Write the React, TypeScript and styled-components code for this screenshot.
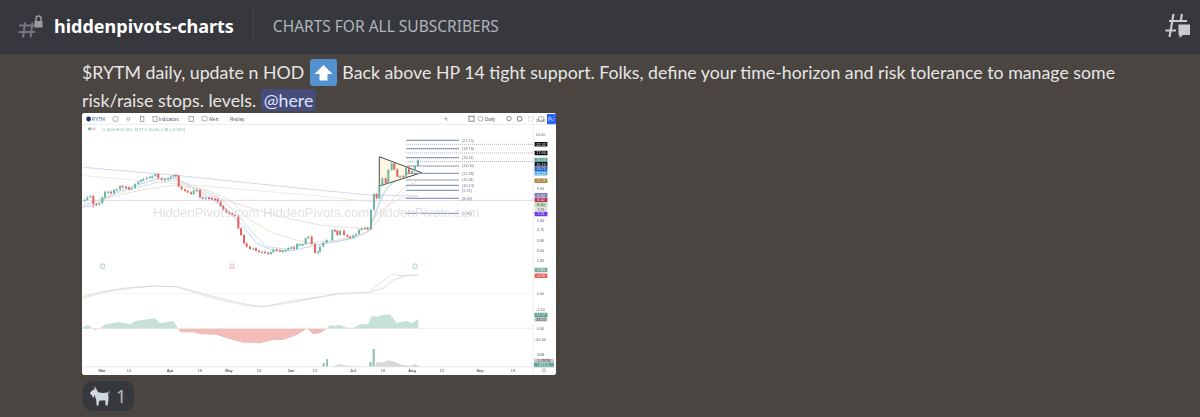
import React from 'react';
import styled, { createGlobalStyle } from 'styled-components';

const GlobalStyle = createGlobalStyle`
    html, body {
        margin: 0;
        padding: 0;
        height: 100%;
        background: #4a4540;
    }
    #root {
        height: 417px;
        overflow: hidden;
    }
`;

const Page = styled.div`
    display: flex;
    flex-direction: column;
    width: 1200px;
    height: 417px;
    background: #4a4540;
    font-family: 'Noto Sans', 'Open Sans', sans-serif;
`;

const Header = styled.header`
    display: flex;
    align-items: center;
    flex-shrink: 0;
    height: 54px;
    padding: 0 10px 2px 18px;
    box-sizing: border-box;
    background: #36383e;
`;

const ChannelName = styled.h1`
    margin: 0 0 0 11px;
    font-size: 18px;
    font-weight: 700;
    color: #ffffff;
`;

const Divider = styled.div`
    width: 1px;
    height: 32px;
    margin: 0 19px;
    background: #45474d;
`;

const Topic = styled.div`
    flex: 1;
    font-size: 15.5px;
    color: #b1b4b9;
`;

const Messages = styled.main`
    display: flex;
    flex-direction: column;
    align-items: flex-start;
    padding: 4px 0 0 82px;
`;

const MessageText = styled.p`
    width: 1050px;
    height: 56px;
    margin: 0;
    font-family: 'Lato', 'Noto Sans', sans-serif;
    font-size: 17.75px;
    line-height: 28px;
    color: #e6e6e6;
`;

const Mention = styled.span`
    padding: 0 3px;
    border-radius: 3px;
    background: #474d7a;
    color: #dfe2fd;
`;

const EmojiBox = styled.svg`
    width: 27px;
    height: 27px;
    margin: 0 1px;
    vertical-align: -7px;
`;

const ChartFrame = styled.div`
    width: 474px;
    height: 262px;
    margin-top: -1px;
    border-radius: 3px;
    overflow: hidden;
    background: #ffffff;
`;

const ChartSvg = styled.svg`
    display: block;
    width: 474px;
    height: 262px;
    filter: blur(0.35px);
    font-family: 'Liberation Sans', Arial, sans-serif;
`;

const ReactionPill = styled.div`
    display: flex;
    align-items: center;
    gap: 6px;
    width: 51px;
    height: 30px;
    margin: 6px 0 0 1px;
    padding: 0 0 0 6px;
    box-sizing: border-box;
    border-radius: 9px;
    background: #36383e;
    color: #b9bbbe;
    font-size: 18px;
`;

type Pt = [number, number];

const zoomTo = (ox: number, oy: number) => (pts: number[]): Pt[] => {
    const out: Pt[] = [];
    for (let i = 0; i < pts.length; i += 2) {
        out.push([pts[i] / 3 + ox, pts[i + 1] / 3 + oy]);
    }
    return out;
};
const upperLeft = zoomTo(-2, -3);
const upperRight = zoomTo(238, -3);
const lowerLeft = zoomTo(-2, 142);
const lowerRight = zoomTo(238, 142);

const toPath = (pts: Pt[]) =>
    pts.map((p, i) => `${i ? 'L' : 'M'}${p[0].toFixed(1)} ${p[1].toFixed(1)}`).join('');

const priceLeft = upperLeft([
    14, 270, 22, 262, 31, 258, 40, 282, 49, 283, 58, 280, 67, 262, 75, 245, 85, 245, 93, 250, 102, 240, 110, 238,
    120, 228, 128, 230, 138, 232, 147, 238, 155, 234, 165, 222, 175, 215, 183, 210, 190, 207, 200, 203, 210, 200,
    217, 199, 226, 192, 235, 205, 245, 208, 255, 207, 265, 205, 273, 200, 281, 195, 288, 197, 296, 230, 305, 238,
    315, 243, 323, 247, 333, 252, 341, 242, 350, 240, 360, 262, 368, 263, 377, 263, 387, 264, 396, 266, 405, 267,
    413, 275, 422, 288, 430, 298, 439, 307, 448, 310, 457, 314, 465, 318, 475, 355, 483, 375, 492, 400, 500, 410,
    510, 417, 520, 415, 528, 422, 537, 425, 546, 425, 555, 428, 565, 432, 573, 427, 580, 418, 590, 420, 600, 422,
    608, 422, 617, 420, 625, 414, 634, 412, 642, 417, 651, 402, 659, 402, 668, 402, 677, 385, 685, 380, 695, 402,
    705, 428, 714, 425,
]);

const priceRight = upperRight([
    0, 410, 10, 398, 20, 390, 37, 360, 45, 362, 52, 375, 60, 362, 72, 375, 82, 380, 90, 383, 100, 376, 108, 372,
    117, 360, 125, 355, 135, 353, 143, 358, 153, 300, 162, 252, 170, 265, 178, 228, 187, 205, 197, 220, 205, 180,
    215, 160, 223, 178, 232, 200, 240, 198, 250, 200, 258, 172, 267, 188, 276, 183, 285, 168, 294, 150,
]);

const candles = [...priceLeft, ...priceRight];

const MOVING_AVERAGES: { color: string; pts: Pt[] }[] = [
    { color: '#a9c9e8', pts: [...upperLeft([8, 292, 40, 287, 65, 272, 120, 242, 170, 226, 225, 208, 290, 205, 340, 235, 400, 270, 450, 310, 490, 350, 530, 400, 580, 422, 640, 422, 720, 402]), ...upperRight([50, 395, 100, 385, 145, 365, 165, 310, 190, 250, 215, 220, 240, 205, 285, 185])] },
    { color: '#c4dbe6', pts: [...upperLeft([8, 285, 70, 265, 120, 247, 170, 233, 230, 218, 295, 210, 350, 232, 420, 265, 470, 310, 510, 360, 560, 410, 620, 417, 700, 397]), ...upperRight([60, 390, 110, 380, 150, 360, 175, 290, 200, 235, 230, 210, 285, 195])] },
    { color: '#e4d8c4', pts: [...upperLeft([8, 290, 60, 270, 130, 252, 200, 237, 290, 225, 380, 240, 450, 270, 510, 330, 580, 370, 650, 390, 720, 405]), ...upperRight([60, 388, 110, 378, 150, 362, 190, 310, 215, 270, 250, 235, 290, 215])] },
    { color: '#ecd4d0', pts: [...upperLeft([295, 215, 400, 260, 500, 290, 600, 320, 720, 345]), ...upperRight([60, 350, 150, 358, 165, 320, 200, 290, 240, 265, 295, 258])] },
    { color: '#c9cfe6', pts: [...upperLeft([10, 172, 300, 197, 720, 241]), ...upperRight([150, 255, 295, 258])] },
    { color: '#ebe4dc', pts: [...upperLeft([10, 197, 300, 222, 720, 258]), ...upperRight([150, 275, 200, 278])] },
];

const FIB_LEVELS: [number, string][] = [
    [91, '(21.75)'], [116, '(18.78)'], [143, '(16.11)'], [168, '(14.00)'], [190, '(12.38)'],
    [210, '(11.04)'], [226, '(10.13)'], [241, '(9.21)'], [265, '(8.09)'], [310, '(5.93)'],
];

const PRICE_LABELS: [number, string][] = [
    [8, '25.00'], [21.5, '24.00'], [75.7, '9.00'], [107.7, '5.90'], [117, '4.75'], [128, '3.80'], [137.7, '3.00'],
    [147.7, '2.80'], [180.7, '0.00'], [197, '-1.50'], [215.3, '0.00'], [226.3, '-40.00'], [241.3, '20M'],
];

const PRICE_TAGS: [number, string, string, string][] = [
    [31.3, '#111111', '#e8e8e8', '22.32'], [40, '#111111', '#e8e8e8', '17.60'], [47, '#5d9d92', '#d8efe9', '15.03'],
    [51.3, '#0c1a22', '#e8e8e8', '15.10'], [56, '#2f5fc4', '#dfe8ff', '13.71'], [60.3, '#5aaee0', '#e8f6ff', '13.21'],
    [67.7, '#a5803f', '#f7ecd5', '11.53'], [82.3, '#8478c0', '#efeafa', '8.63'], [87, '#b13a5c', '#f7dbe3', '8.42'],
    [91.7, '#c2d9bd', '#55684f', '8.40'], [96.3, '#e3e3e3', '#666666', '7.81'], [101, '#6d3fe0', '#e9e1ff', '7.31'],
    [157, '#7fae9d', '#dff0ea', '1.60'], [162.7, '#e2635a', '#fde3e0', '-0.20'], [202, '#5d9d92', '#d8efe9', '37.37'],
    [206.3, '#b9c3c2', '#444444', '33.53'], [248, '#c9c9c9', '#444444', '5.787M'], [252, '#5da89c', '#d8efe9', '877.5'],
];

const DATE_LABELS: [number, string, boolean][] = [
    [20, 'Mar', true], [47, '14', false], [88, 'Apr', true], [118, '18', false], [147, 'May', true], [177, '16', false],
    [209, 'Jun', true], [233, '13', false], [271, 'Jul', true], [301, '18', false], [330, 'Aug', true], [360, '15', false],
    [398, 'Sep', true], [431, '19', false],
];

const GREEN = '#6fb5a5';
const RED = '#e0645f';

const Candles = () => (
    <g>
        {candles.map((p, i) => {
            const prev = candles[i - 1] || p;
            const up = p[1] <= prev[1];
            const top = Math.min(p[1], prev[1]);
            const height = Math.max(Math.abs(p[1] - prev[1]), 1.4);
            const color = up ? GREEN : RED;
            const wickBottom = i === 3 ? top + 12 : top + height + 1;
            return (
                <g key={i}>
                    <line x1={p[0]} x2={p[0]} y1={top - 1.2} y2={wickBottom} stroke={color} strokeWidth={0.6} />
                    <rect x={p[0] - 1} y={top} width={2} height={height} fill={color} />
                </g>
            );
        })}
    </g>
);

const Toolbar = () => (
    <g fontSize={4.6} fill="#555b66">
        <circle cx={6.6} cy={6} r={2.4} fill="#1d2c6b" />
        <text x={10} y={7.6} fill="#3a5a9c">RYTM</text>
        <circle cx={33.5} cy={6} r={2.7} fill="none" stroke="#777" strokeWidth={0.6} />
        <circle cx={46.3} cy={6} r={1.4} fill="none" stroke="#777" strokeWidth={0.6} />
        <rect x={58.5} y={3.6} width={3.4} height={4.8} fill="none" stroke="#777" strokeWidth={0.6} />
        <rect x={71} y={3.6} width={4} height={4.8} fill="none" stroke="#777" strokeWidth={0.6} />
        <text x={77} y={7.6}>Indicators</text>
        <rect x={107} y={3.6} width={4.6} height={4.8} fill="none" stroke="#777" strokeWidth={0.6} />
        <rect x={120} y={3.4} width={5} height={4.4} rx={1} fill="none" stroke="#777" strokeWidth={0.6} />
        <text x={127} y={7.6}>Alert</text>
        <text x={148} y={7.6}>Replay</text>
        <text x={362} y={7.6} fontSize={5}>↰</text>
        <rect x={387} y={3.2} width={5} height={5} fill="none" stroke="#555" strokeWidth={0.7} />
        <circle cx={398.5} cy={5.8} r={2.4} fill="none" stroke="#888" strokeWidth={0.6} />
        <text x={403} y={7.6}>Daily</text>
        <circle cx={427} cy={5.6} r={2.2} fill="none" stroke="#666" strokeWidth={0.7} />
        <circle cx={437.6} cy={5.8} r={2.4} fill="none" stroke="#666" strokeWidth={0.9} />
        <rect x={446.6} y={3.4} width={4.6} height={4.6} fill="none" stroke="#777" strokeWidth={0.5} strokeDasharray="1.4 1.8" />
        <rect x={456.4} y={3.8} width={5.4} height={4.2} rx={0.8} fill="none" stroke="#777" strokeWidth={0.6} />
        <rect x={465} y={1} width={9} height={10.4} fill="#2962ff" />
        <text x={466.2} y={7.6} fill="#dfe7ff">Pu</text>
        <line x1={0} x2={474} y1={11.4} y2={11.4} stroke="#dfe1e6" strokeWidth={0.6} />
        <rect x={6.2} y={14.6} width={3} height={2.6} fill={GREEN} />
        <rect x={10} y={14.6} width={3.6} height={2.6} fill="#f3c9d3" />
        <text x={20} y={18} fontSize={3.8} fill={GREEN}>O 14.00 H 15.33 L 13.77 C 15.03 +1.38 (+9.74%)</text>
    </g>
);

const Fibs = () => (
    <g fontSize={3.8} fill="#6f7785">
        {FIB_LEVELS.map(([y, label]) => (
            <g key={label}>
                <line x1={324} x2={377} y1={y / 3 - 3} y2={y / 3 - 3} stroke="#8f9db5" strokeWidth={1.2} />
                <text x={380} y={y / 3 - 1.6}>{label}</text>
            </g>
        ))}
        {[103, 129, 155].map(y => (
            <line key={y} x1={324} x2={451} y1={y / 3 - 3} y2={y / 3 - 3} stroke="#5c6068" strokeWidth={0.5} strokeDasharray="1 1" />
        ))}
    </g>
);

const PriceAxis = () => (
    <g fontSize={3.9} textAnchor="middle">
        <line x1={451.4} x2={451.4} y1={11.4} y2={262} stroke="#e2e4e8" strokeWidth={0.6} />
        {PRICE_LABELS.map(([y, label]) => (
            <text key={y} x={458.5} y={y + 1.3} fill="#6a6f78">{label}</text>
        ))}
        {PRICE_TAGS.map(([y, bg, fg, label]) => (
            <g key={y}>
                <rect x={y > 240 ? 452 : 452.6} y={y - 2.3} width={y > 240 ? 20 : 12.8} height={4.6} rx={0.6} fill={bg} />
                <text x={y > 240 ? 462 : 459} y={y + 1.3} fill={fg}>{label}</text>
            </g>
        ))}
    </g>
);

const DateAxis = () => (
    <g fontSize={3.9} textAnchor="middle" fill="#555b66">
        {DATE_LABELS.map(([x, label, bold]) => (
            <text key={label + x} x={x} y={259.4} fontWeight={bold ? 700 : 400}>{label}</text>
        ))}
        <circle cx={462} cy={257.4} r={1.6} fill="none" stroke="#666" strokeWidth={0.5} />
    </g>
);

const Oscillators = () => {
    const base = 142 + 220 / 3;
    const greenLeft = lowerLeft([8, 221, 8, 215, 25, 210, 38, 221]);
    const redLeft = lowerLeft([38, 221, 45, 225, 58, 221]);
    const greenMid = lowerLeft([58, 221, 75, 208, 115, 202, 150, 207, 170, 197, 225, 190, 240, 205, 280, 197, 295, 221]);
    const redMid = lowerLeft([295, 221, 300, 232, 340, 232, 360, 238, 410, 240, 440, 250, 490, 263, 540, 265, 580, 255, 610, 255, 650, 240, 680, 221, 700, 238, 720, 235]);
    const redEnd = lowerRight([0, 235, 20, 221]);
    const greenEnd = lowerRight([20, 221, 30, 210, 45, 212, 60, 210, 80, 218, 100, 218, 120, 208, 145, 208, 155, 182, 175, 185, 185, 180, 210, 178, 230, 205, 260, 197, 275, 205, 295, 193, 295, 220]);
    const volume = lowerRight([165, 335, 170, 322, 190, 322, 205, 316, 225, 320, 245, 330, 275, 332, 285, 327, 300, 335]);
    return (
        <g>
            <path d={toPath(lowerLeft([8, 130, 60, 115, 130, 102, 220, 93, 290, 95, 350, 115, 420, 135, 500, 152, 550, 155, 620, 145, 720, 127]).concat(lowerRight([50, 118, 145, 113, 180, 85, 215, 58, 240, 62, 295, 60])))} fill="none" stroke="#e6cfca" strokeWidth={0.7} />
            <path d={toPath(lowerLeft([8, 125, 60, 111, 130, 100, 220, 93, 290, 95, 340, 108, 420, 130, 500, 148, 550, 155, 620, 140, 720, 125]).concat(lowerRight([50, 115, 145, 113, 190, 100, 220, 75, 260, 62, 295, 60])))} fill="none" stroke="#cbd6d8" strokeWidth={0.7} />
            <line x1={0} x2={451} y1={142 + 116 / 3} y2={142 + 116 / 3} stroke="#eceef0" strokeWidth={0.6} />
            <rect x={18.5} y={151} width={4} height={4.6} rx={0.8} fill="#eef8f5" stroke="#7bb5a8" strokeWidth={0.5} />
            <rect x={148} y={151} width={4} height={4.6} rx={0.8} fill="#fbeeee" stroke="#dd8c88" strokeWidth={0.5} />
            <rect x={331} y={151} width={4} height={4.6} rx={0.8} fill="#eef8f5" stroke="#7bb5a8" strokeWidth={0.5} />
            <path d={toPath(greenLeft) + 'Z'} fill="#c6e1da" />
            <path d={toPath(redLeft) + 'Z'} fill="#f2bcb8" />
            <path d={toPath(greenMid) + 'Z'} fill="#c6e1da" />
            <path d={toPath(redMid.concat(redEnd)) + 'Z'} fill="#f2bcb8" />
            <path d={toPath(greenEnd) + 'Z'} fill="#c6e1da" />
            <line x1={0} x2={451} y1={base} y2={base} stroke="#dfe1e4" strokeWidth={0.6} />
            <path d={toPath(volume) + 'Z'} fill="#d8d8da" />
            <rect x={290.6} y={236} width={2.2} height={17.6} fill="#8cc4ba" />
            <rect x={287.4} y={249} width={2.2} height={4.6} fill="#8cc4ba" />
            <rect x={244} y={246} width={2} height={7.6} fill="#8cc4ba" />
            <rect x={240.6} y={250} width={2} height={3.6} fill="#8cc4ba" />
            <path d={toPath(lowerRight([40, 335, 55, 326, 75, 331, 120, 335])) + 'Z'} fill="#dedee0" />
            <line x1={0} x2={474} y1={253.8} y2={253.8} stroke="#d6d8dc" strokeWidth={0.6} />
        </g>
    );
};

const Chart = () => (
    <ChartSvg viewBox="0 0 474 262" role="img">
        <rect width={474} height={262} fill="#ffffff" />
        <Toolbar />
        <line x1={0} x2={451} y1={87.4} y2={87.4} stroke="#c9b8ee" strokeWidth={0.6} />
        {MOVING_AVERAGES.map(ma => (
            <path key={ma.color} d={toPath(ma.pts)} fill="none" stroke={ma.color} strokeWidth={0.8} />
        ))}
        <path d={toPath(upperRight([178, 140, 305, 188, 178, 228])) + 'Z'} fill="#fdf8e4" stroke="#33373a" strokeWidth={0.9} />
        <Fibs />
        <Candles />
        <text x={71} y={104} fontSize={13.2} fill="#d6d8dc" opacity={0.75}>HiddenPivots.com HiddenPivots.com HiddenPivots.com</text>
        <PriceAxis />
        <Oscillators />
        <DateAxis />
    </ChartSvg>
);

const HashLockIcon = () => (
    <svg width="25" height="23" viewBox="0 0 25 23" fill="none">
        <path d="M1 10.5H19M0.5 17H17M7 7.5L5 22.5M14.5 7.5L12.5 22.5" stroke="#74777d" strokeWidth="2" />
        <path d="M16.5 6h8v6.5h-8z" fill="#9a9ca1" />
        <path d="M18 6V3.4a2.5 2.5 0 0 1 5 0V6" stroke="#9a9ca1" strokeWidth="1.5" />
    </svg>
);

const ThreadsIcon = () => (
    <svg width="25" height="26" viewBox="0 0 25 26" fill="none">
        <path d="M4 8H22M0.5 17.500H11M8.500 1L4.500 24M17 1L15.500 9" stroke="#c9cbce" strokeWidth="2.2" />
        <path d="M13.500 11.500H25V22H18L14.500 25V22H13.500Z" fill="#c9cbce" />
    </svg>
);

const ArrowEmoji = () => (
    <EmojiBox viewBox="0 0 27 27">
        <rect width="27" height="27" rx="3" fill="#5492cf" />
        <path d="M13.5 6L22.5 15H17.5V21.5H9.5V15H4.5Z" fill="#ffffff" />
    </EmojiBox>
);

const GoatEmoji = () => (
    <svg width="21" height="20" viewBox="0 0 22 21">
        <path d="M6 5C5 3 5 1.500 7 0.500C6.800 2 7.800 3 9 4.500Z" fill="#c9a77c" />
        <path d="M3.500 4.500L7 3.500L10 6.500C13 7.500 17 7.500 20 6.500L20.500 13L19.500 20.500H17.500L17 15L10.500 15.500L10 20.500H8L7.500 14C6.500 12 6 10 5.500 9.500L2.500 9.500L0.800 7.500Z" fill="#cfd8de" />
        <path d="M20 6.500L21.800 4.500L21.500 8Z" fill="#9aa5ac" />
        <path d="M3 9.500L4.500 12.800L5.500 9.500Z" fill="#e7e7e4" />
    </svg>
);

const App = () => {
    return (
        <Page>
            <GlobalStyle />
            <Header>
                <HashLockIcon />
                <ChannelName>hiddenpivots-charts</ChannelName>
                <Divider />
                <Topic>CHARTS FOR ALL SUBSCRIBERS</Topic>
                <ThreadsIcon />
            </Header>
            <Messages>
                <MessageText>
                    $RYTM daily, update n HOD <ArrowEmoji /> Back above HP 14 tight support. Folks, define your time-horizon and risk tolerance to manage some risk/raise stops. levels. <Mention>@here</Mention>
                </MessageText>
                <ChartFrame>
                    <Chart />
                </ChartFrame>
                <ReactionPill>
                    <GoatEmoji />
                    <span>1</span>
                </ReactionPill>
            </Messages>
        </Page>
    );
};

export default App;
